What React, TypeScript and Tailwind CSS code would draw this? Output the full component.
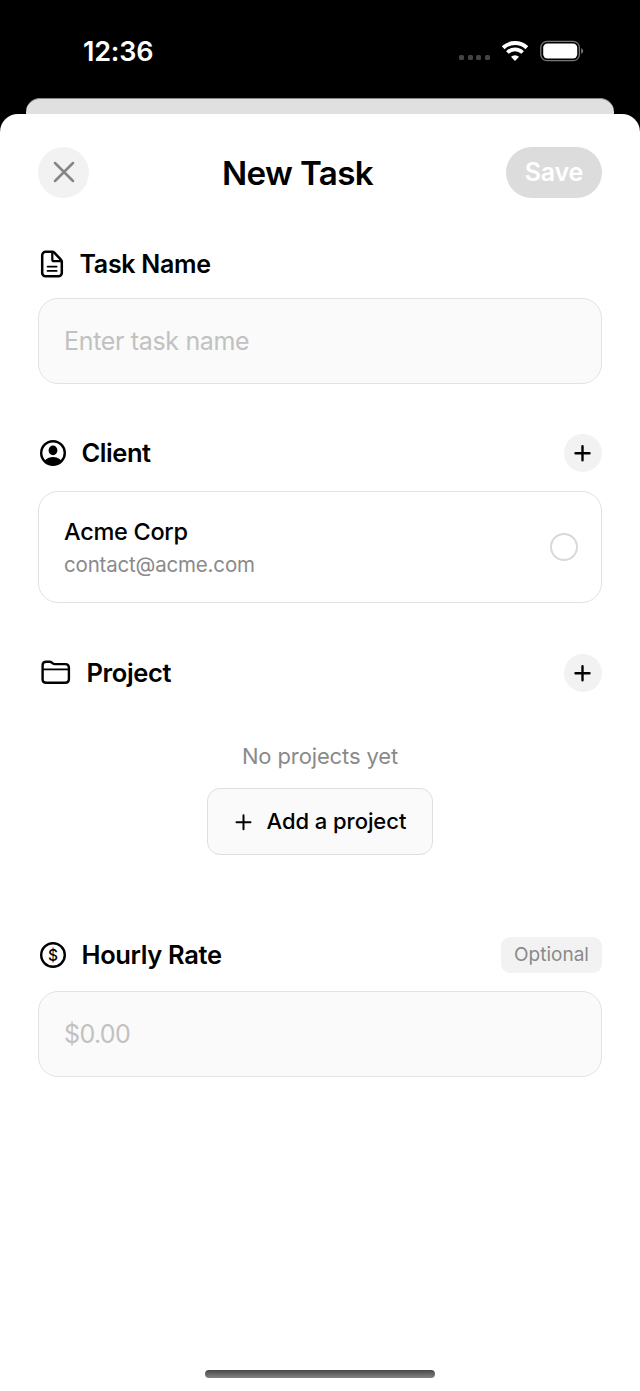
interface SectionHeaderProps {
  icon: React.ReactNode;
  title: string;
  titleClass: string;
  children?: React.ReactNode;
}

function SectionHeader({ icon, title, titleClass, children }: SectionHeaderProps) {
  return (
    <div className="flex h-[38px] items-center">
      {icon}
      <h2 className={`font-semibold leading-[38px] whitespace-nowrap ${titleClass}`}>{title}</h2>
      <div className="ml-auto">{children}</div>
    </div>
  );
}

function AddButton({ label }: { label: string }) {
  return (
    <button aria-label={label} className="flex size-[38px] items-center justify-center rounded-full bg-[#f2f2f2]">
      <PlusIcon strokeWidth={2.4} />
    </button>
  );
}

function PlusIcon({ strokeWidth }: { strokeWidth: number }) {
  return (
    <svg width="18" height="18" viewBox="0 0 18 18" stroke="#000" strokeWidth={strokeWidth} strokeLinecap="round">
      <path d="M8.5 2.2v14M1.5 9.2h14" />
    </svg>
  );
}

function DocumentIcon() {
  return (
    <svg width="24" height="28" viewBox="0 0 24 28" fill="none" stroke="#000" strokeWidth="2.5" strokeLinejoin="round" strokeLinecap="round">
      <path d="M12.2 1.8H5.6A3.4 3.4 0 0 0 2.2 5.2v17.7a3.4 3.4 0 0 0 3.4 3.4h12.8a3.4 3.4 0 0 0 3.4-3.4V11.8c0-.9-.3-1.6-.9-2.2l-6.6-6.9c-.6-.6-1.2-.9-2.1-.9Z" />
      <path d="M12.3 2v7.4c0 1.2.6 1.8 1.8 1.8h7.4" strokeWidth="2.2" />
      <path d="M7.6 16.6h9M7.6 20.9h9" strokeWidth="1.9" />
    </svg>
  );
}

function PersonIcon() {
  return (
    <svg width="26" height="26" viewBox="0 0 26 26">
      <defs>
        <clipPath id="person-ring">
          <circle cx="13" cy="13" r="12" />
        </clipPath>
      </defs>
      <circle cx="13" cy="13" r="11.8" fill="none" stroke="#000" strokeWidth="2.4" />
      <ellipse cx="13" cy="10.4" rx="4.4" ry="4.8" />
      <g clipPath="url(#person-ring)">
        <ellipse cx="13" cy="24.1" rx="9.4" ry="7.2" />
      </g>
    </svg>
  );
}

function FolderIcon() {
  return (
    <svg className="-mt-px" width="30" height="25" viewBox="0 0 30 25" fill="none" stroke="#000" strokeWidth="2.4" strokeLinejoin="round">
      <path d="M1.6 19.6V5.2c0-2.4 1.2-3.5 3.5-3.5h3.4c1 0 1.7.3 2.4.9l.9.8c.6.5 1.2.7 2.1.7h10.4c2.4 0 3.6 1.2 3.6 3.5v11.6c0 2.4-1.2 3.6-3.6 3.6H5.1c-2.3 0-3.5-1.2-3.5-3.2Z" />
      <path d="M1.6 9.4h26.3" strokeWidth="1.8" />
    </svg>
  );
}

function DollarIcon() {
  return (
    <svg width="26" height="26" viewBox="0 0 26 26">
      <circle cx="13" cy="13" r="11.8" fill="none" stroke="#000" strokeWidth="2.4" />
      <text x="13" y="18.6" textAnchor="middle" className="text-[15.5px] font-medium">$</text>
    </svg>
  );
}

function StatusBar() {
  return (
    <div className="flex h-[98px] items-start pt-[37px] pl-[83px] pr-[56px] text-white">
      <span className="pt-px text-[27px] font-semibold leading-7 tracking-[-0.2px]">12:36</span>
      <div className="ml-auto flex h-7 items-center">
        <div className="mr-[12px] mt-[12px] flex gap-[3.6px]">
          <span className="size-[5px] rounded-[1.5px] bg-[#444]" />
          <span className="size-[5px] rounded-[1.5px] bg-[#444]" />
          <span className="size-[5px] rounded-[1.5px] bg-[#444]" />
          <span className="size-[5px] rounded-[1.5px] bg-[#444]" />
        </div>
        <svg className="-mt-px" width="26" height="20" viewBox="0 0 26 20" fill="none" stroke="#fff">
          <path d="M1.2 6.7a17.2 17.2 0 0 1 23.6 0" strokeWidth="4" />
          <path d="M5.4 11.5a11 11 0 0 1 15.2 0" strokeWidth="3.8" />
          <path d="M13 19.9l-4-4.1a5.8 5.8 0 0 1 8 0z" fill="#fff" stroke="none" />
        </svg>
        <svg className="-mt-px ml-3" width="44" height="22" viewBox="0 0 44 22">
          <rect x=".8" y="1.3" width="38.6" height="19.4" rx="6.2" fill="none" stroke="#777" strokeWidth="1.3" />
          <rect x="3.2" y="3.6" width="34" height="14.8" rx="4.2" fill="#fff" />
          <path d="M41.2 8.2c2.6 1 2.6 4.6 0 5.6z" fill="#777" />
        </svg>
      </div>
    </div>
  );
}

export default function App() {
  return (
    <div className="flex h-[1391px] w-[640px] flex-col overflow-hidden bg-black font-['Inter','Liberation_Sans',sans-serif] text-black">
      <StatusBar />

      {/* Edge of the screen behind the sheet */}
      <div className="mx-[26px] h-4 shrink-0 rounded-t-[14px] border-t border-[#8a8a8a] bg-[#e0e0e0]" />

      <main className="flex flex-1 flex-col rounded-t-[18px] bg-white px-[38px] pt-[33px]">
        <header className="flex h-[51px] items-center justify-between">
          <button aria-label="Close" className="flex size-[51px] items-center justify-center rounded-full bg-[#f2f2f2]">
            <svg className="-mt-px" width="22" height="22" viewBox="0 0 22 22" stroke="#858585" strokeWidth="2.5" strokeLinecap="round">
              <path d="M2 2l18 18M20 2L2 20" />
            </svg>
          </button>
          <h1 className="pt-[2px] text-[33.2px] font-semibold leading-[51px] tracking-[-0.65px] whitespace-nowrap">New Task</h1>
          <button className="h-[51px] w-24 rounded-full bg-[#dcdcdc] text-[25px] font-semibold tracking-[-0.2px] text-white">Save</button>
        </header>

        <section className="mt-[47px]">
          <SectionHeader icon={<span className="ml-0.5 mr-[15.5px]"><DocumentIcon /></span>} title="Task Name" titleClass="text-[25px] tracking-[-0.3px]" />
          <div className="mt-[15px] flex h-[86px] items-center rounded-[20px] border border-[#e2e2e2] bg-[#fafafa] pt-0.5 pl-[25px]">
            <span className="text-[25px] tracking-[-0.33px] text-[#c1c1c1]">Enter task name</span>
          </div>
        </section>

        <section className="mt-[50px]">
          <SectionHeader icon={<span className="ml-0.5 mr-[15.5px]"><PersonIcon /></span>} title="Client" titleClass="text-[25.5px] tracking-[-0.45px]">
            <AddButton label="Add client" />
          </SectionHeader>
          <div className="mt-[19px] flex h-28 items-center justify-between rounded-[20px] border border-[#e2e2e2] pl-[25px] pr-[23.5px]">
            <div className="pt-0.5">
              <p className="text-[23.5px] font-medium leading-[33px] tracking-[-0.3px]">Acme Corp</p>
              <p className="text-[20.5px] leading-[33px] tracking-[-0.18px] text-[#8a8a8a]">contact@acme.com</p>
            </div>
            <span className="size-7 rounded-full border-2 border-[#d9d9d9]" />
          </div>
        </section>

        <section className="mt-[51px]">
          <SectionHeader icon={<span className="ml-[2.5px] mr-4"><FolderIcon /></span>} title="Project" titleClass="text-[25.5px] tracking-[-0.35px]">
            <AddButton label="Add project" />
          </SectionHeader>
          <div className="mt-[49px] flex flex-col items-center">
            <p className="text-[22px] leading-[30px] tracking-[-0.12px] text-[#8a8a8a]">No projects yet</p>
            <button className="mt-[17px] flex h-[67px] w-[226px] items-center rounded-[13px] border border-[#dfdfdf] bg-[#fafafa] pl-[26.5px]">
              <PlusIcon strokeWidth={2} />
              <span className="ml-[14px] text-[22px] font-medium tracking-[-0.05px] whitespace-nowrap">Add a project</span>
            </button>
          </div>
        </section>

        <section className="mt-[81px]">
          <SectionHeader icon={<span className="ml-0.5 mr-[15.5px]"><DollarIcon /></span>} title="Hourly Rate" titleClass="text-[25.5px] tracking-[-0.35px]">
            <span className="flex h-9 w-[101px] items-center justify-center rounded-[9px] bg-[#f2f2f2] pt-px text-[19px] text-[#8a8a8a]">
              Optional
            </span>
          </SectionHeader>
          <div className="mt-[17px] flex h-[86px] items-center rounded-[20px] border border-[#e2e2e2] bg-[#fafafa] pt-0.5 pl-[25px]">
            <span className="text-[25px] tracking-[-0.65px] text-[#c1c1c1]">$0.00</span>
          </div>
        </section>

        {/* Home indicator */}
        <div className="mx-auto mt-auto mb-[13px] h-2 w-[230px] rounded-full bg-gradient-to-b from-[#484848] to-[#858585]" />
      </main>
    </div>
  );
}
